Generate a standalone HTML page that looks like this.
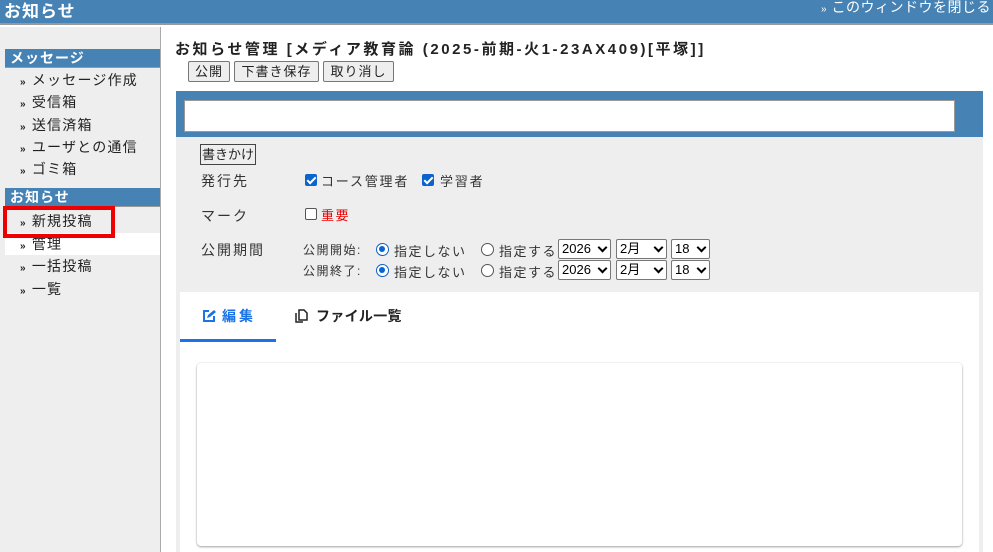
<!DOCTYPE html>
<html><head><meta charset="utf-8"><style>
*{margin:0;padding:0;box-sizing:border-box}
body{width:993px;height:552px;overflow:hidden;background:#fff;font-family:"Liberation Sans","Noto Sans CJK JP",sans-serif;color:#222;position:relative}
.hdr{position:absolute;left:0;top:0;width:993px;height:25px;background:#4682b4;border-bottom:2px solid #999;color:#fff}
.hdr .t{position:absolute;left:4px;top:0;font-size:17px;font-weight:bold;line-height:23px;letter-spacing:1px}
.hdr .c{position:absolute;right:2px;top:0;font-size:14px;line-height:15px;letter-spacing:0.5px}
.side{position:absolute;left:0;top:27px;width:161px;height:525px;background:#eee;border-right:1px solid #aaa}
.sh{position:absolute;left:5px;width:155px;height:19px;background:#4682b4;color:#fff;font-weight:bold;font-size:14px;line-height:19px;padding-left:5px;border-bottom:1px solid #999;letter-spacing:1px}
.si{position:absolute;left:20px;font-size:14px;line-height:20px;letter-spacing:1.2px}
.si b{font-size:10px;font-weight:bold}
.abs{position:absolute}
.btn{position:absolute;top:61px;height:21px;border:1px solid #777;background:#eee;font-size:13px;line-height:19px;text-align:center;border-radius:2px;letter-spacing:1px}
.lbl{position:absolute;left:201px;font-size:14px;color:#333;letter-spacing:2px}
.cb{position:absolute;width:12px;height:12px;border-radius:2px;background:#0b63ce}
.cb:after{content:"";position:absolute;left:4px;top:1px;width:3px;height:7px;border:solid #fff;border-width:0 2px 2px 0;transform:rotate(45deg)}
.cbo{position:absolute;width:12px;height:12px;border:1px solid #555;border-radius:2px;background:#fff}
.r{position:absolute;width:13px;height:13px;border-radius:50%;border:1px solid #555;background:#fff}
.r.on{border-color:#0b63ce;border-width:1.5px}
.r.on:after{content:"";position:absolute;left:2px;top:2px;width:6px;height:6px;border-radius:50%;background:#0b63ce}
.sel{position:absolute;height:20px;border:1px solid #777;border-radius:2px;background:#fff;font-size:13px;line-height:18px;padding-left:3px;color:#000}
.sel:after{content:"";position:absolute;right:4px;top:4px;width:5px;height:5px;border:solid #000;border-width:0 2px 2px 0;transform:rotate(45deg)}
.tx{position:absolute;font-size:12px;color:#333;white-space:nowrap;letter-spacing:1.5px}
</style></head><body>
<div class="hdr"><div class="t">お知らせ</div><div class="c"><span style="font-size:10px">»</span> このウィンドウを閉じる</div></div>
<div class="side">
<div class="sh" style="top:22px">メッセージ</div>
<div class="si" style="top:43px"><b>»</b> メッセージ作成</div>
<div class="si" style="top:65px"><b>»</b> 受信箱</div>
<div class="si" style="top:88px"><b>»</b> 送信済箱</div>
<div class="si" style="top:110px"><b>»</b> ユーザとの通信</div>
<div class="si" style="top:132px"><b>»</b> ゴミ箱</div>
<div class="sh" style="top:161px">お知らせ</div>
<div class="si" style="top:184px"><b>»</b> 新規投稿</div>
<div class="abs" style="left:5px;top:206px;width:155px;height:22px;background:#fff"></div>
<div class="si" style="top:207px"><b>»</b> 管理</div>
<div class="si" style="top:229px"><b>»</b> 一括投稿</div>
<div class="si" style="top:252px"><b>»</b> 一覧</div>
<div class="abs" style="left:3px;top:179px;width:112px;height:32px;border:4px solid #e00"></div>
</div>
<div class="abs" style="left:175px;top:38px;font-size:15px;font-weight:bold;letter-spacing:2.55px;color:#222;white-space:nowrap">お知らせ管理 [メディア教育論 (2025-前期-火1-23AX409)[平塚]]</div>
<div class="btn" style="left:188px;width:42px">公開</div>
<div class="btn" style="left:234px;width:85px">下書き保存</div>
<div class="btn" style="left:323px;width:71px">取り消し</div>
<div class="abs" style="left:176px;top:91px;width:807px;height:461px;background:#eee"></div>
<div class="abs" style="left:176px;top:91px;width:807px;height:46px;background:#4682b4"></div>
<div class="abs" style="left:184px;top:100px;width:771px;height:32px;background:#fff;border:1px solid #999"></div>
<div class="abs" style="left:200px;top:144px;height:21px;border:1px solid #444;background:#eee;font-size:13px;line-height:19px;padding:0 1px">書きかけ</div>
<div class="lbl" style="top:171px">発行先</div>
<span class="cb" style="left:305px;top:174px"></span><span class="tx" style="left:321px;top:171px;font-size:13px;letter-spacing:1.8px">コース管理者</span>
<span class="cb" style="left:422px;top:174px"></span><span class="tx" style="left:440px;top:171px;font-size:13px;letter-spacing:1.8px">学習者</span>
<div class="lbl" style="top:206px">マーク</div>
<span class="cbo" style="left:305px;top:208px"></span><span class="tx" style="left:321px;top:205px;font-size:13px;color:#e00">重要</span>
<div class="lbl" style="top:240px">公開期間</div>
<span class="tx" style="left:303px;top:241px">公開開始:</span>
<span class="r on" style="left:376px;top:243px"></span><span class="tx" style="left:394px;top:241px;font-size:13px">指定しない</span>
<span class="r" style="left:481px;top:243px"></span><span class="tx" style="left:499px;top:241px;font-size:13px">指定する</span>
<span class="sel" style="left:558px;top:239px;width:53px">2026</span><span class="sel" style="left:616px;top:239px;width:51px">2月</span><span class="sel" style="left:671px;top:239px;width:39px">18</span>
<span class="tx" style="left:303px;top:262px">公開終了:</span>
<span class="r on" style="left:376px;top:264px"></span><span class="tx" style="left:394px;top:262px;font-size:13px">指定しない</span>
<span class="r" style="left:481px;top:264px"></span><span class="tx" style="left:499px;top:262px;font-size:13px">指定する</span>
<span class="sel" style="left:558px;top:260px;width:53px">2026</span><span class="sel" style="left:616px;top:260px;width:51px">2月</span><span class="sel" style="left:671px;top:260px;width:39px">18</span>
<div class="abs" style="left:180px;top:292px;width:799px;height:260px;background:#fff"></div>
<svg class="abs" style="left:202px;top:309px" width="14" height="14" viewBox="0 0 14 14"><path d="M7 2H2v10h10V7" fill="none" stroke="#1a73e8" stroke-width="2"/><path d="M5 9l1-3 6-5 2 2-6 5z" fill="#1a73e8"/></svg>
<div class="abs" style="left:222px;top:306px;font-size:14px;font-weight:bold;color:#1a73e8;letter-spacing:3px">編集</div>
<svg class="abs" style="left:295px;top:309px" width="13" height="14" viewBox="0 0 13 14"><path d="M4 1h5l3 3v7H4z M1 4v9h7" fill="none" stroke="#222" stroke-width="1.5"/></svg>
<div class="abs" style="left:316px;top:306px;font-size:14px;font-weight:bold;color:#222;letter-spacing:0.3px">ファイル一覧</div>
<div class="abs" style="left:180px;top:339px;width:96px;height:3px;background:#1a73e8"></div>
<div class="abs" style="left:197px;top:363px;width:765px;height:183px;background:#fff;border-radius:4px;box-shadow:0 1px 2px rgba(0,0,0,.35),0 0 2px rgba(0,0,0,.08)"></div>
</body></html>
